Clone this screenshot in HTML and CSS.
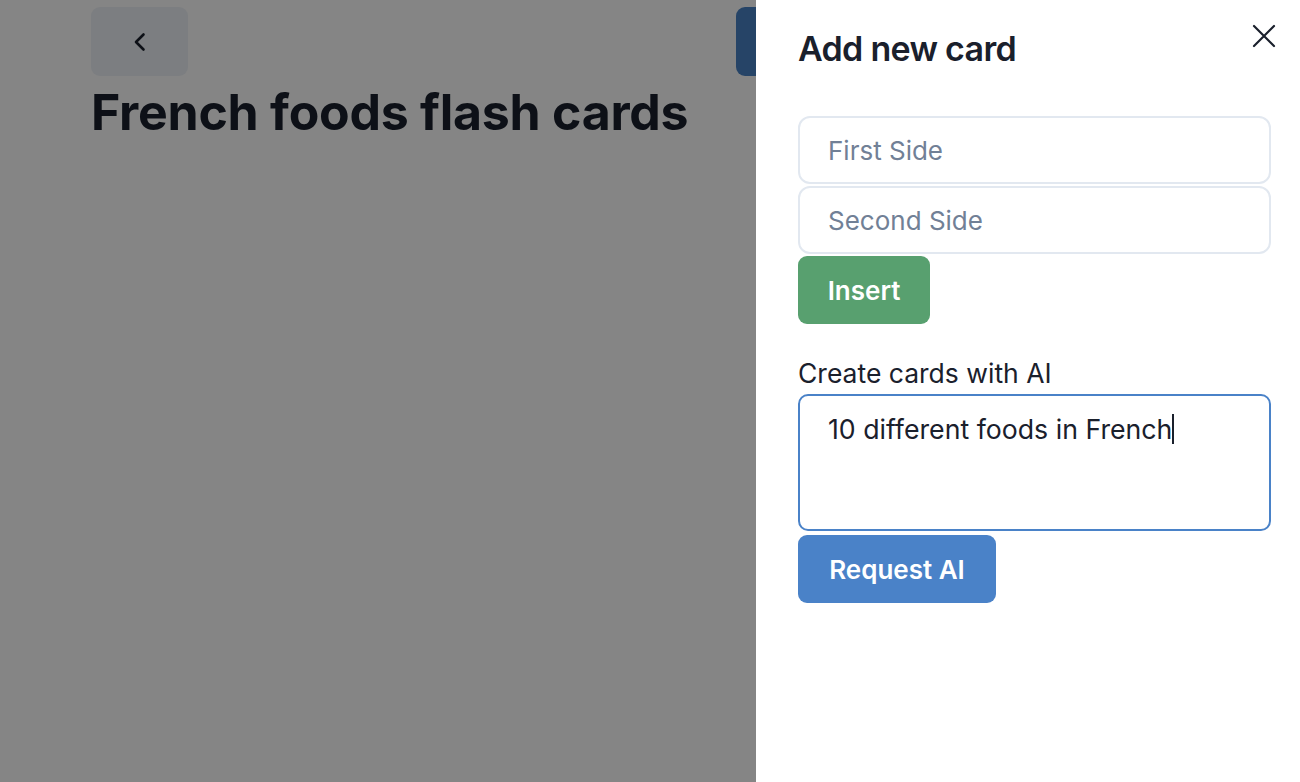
FILE: index.html
```html
<!DOCTYPE html>
<html>
<head>
<meta charset="utf-8">
<link rel="stylesheet" href="styles.css">
</head>
<body>
<div class="page">
  <div class="header">
    <button class="back-btn" aria-label="Back">
      <svg width="22" height="22" viewBox="0 0 22 22"><path d="M14.5 3.5 L7 11 L14.5 18.5" fill="none" stroke="#1a202c" stroke-width="2.6" stroke-linecap="round" stroke-linejoin="round"/></svg>
    </button>
    <button class="add-btn" aria-label="Add new card"></button>
  </div>
  <h1 class="title">French foods flash cards</h1>
</div>
<div class="overlay"></div>
<aside class="drawer">
  <button class="close-btn" aria-label="Close">
    <svg width="24" height="24" viewBox="0 0 24 24"><path d="M2 2 L22 22 M22 2 L2 22" stroke="#1a202c" stroke-width="2.2" stroke-linecap="round"/></svg>
  </button>
  <h2 class="drawer-title">Add new card</h2>
  <div class="drawer-body">
    <div class="form">
      <input class="field" type="text" placeholder="First Side">
      <input class="field" type="text" placeholder="Second Side">
      <div><button class="btn btn-green">Insert</button></div>
    </div>
    <div class="form ai">
      <label class="label">Create cards with AI</label>
      <div class="textarea"><span>10 different foods in French</span><span class="caret"></span></div>
      <div><button class="btn btn-blue">Request AI</button></div>
    </div>
  </div>
</aside>
</body>
</html>
```
FILE: styles.css
```css
* { box-sizing: border-box; }
html, body { margin: 0; padding: 0; }
body {
  width: 1300px;
  height: 782px;
  overflow: hidden;
  background: #fff;
  font-family: Inter, "Noto Sans", sans-serif;
  color: #1a202c;
}
.page {
  padding: 7px 91px 0;
}
.header {
  display: flex;
  justify-content: space-between;
  align-items: center;
}
.back-btn {
  width: 97px;
  height: 69px;
  border: none;
  border-radius: 9px;
  background: #edf2f7;
  display: flex;
  align-items: center;
  justify-content: center;
  padding: 0;
}
.add-btn {
  height: 69px;
  width: 300px;
  margin-left: auto;
  margin-right: 173px;
  border: none;
  border-radius: 9px;
  background: #4a83c6;
}
.title {
  margin: 6px 0 0;
  font-size: 50px;
  font-weight: 700;
  letter-spacing: -0.25px;
  line-height: 60px;
  color: #1a202c;
}
.overlay {
  position: fixed;
  inset: 0;
  background: rgba(0, 0, 0, 0.48);
}
.drawer {
  position: fixed;
  top: 0;
  right: 0;
  bottom: 0;
  width: 544px;
  background: #fff;
  padding: 26px 30px 0 42px;
}
.close-btn {
  position: absolute;
  top: 24px;
  right: 24px;
  width: 24px;
  height: 24px;
  padding: 0;
  border: none;
  background: none;
}
.drawer-title {
  margin: 0;
  font-size: 34px;
  font-weight: 600;
  line-height: 46px;
  letter-spacing: -0.7px;
}
.drawer-body {
  padding-top: 44px;
  display: flex;
  flex-direction: column;
  gap: 32px;
}
.form {
  display: flex;
  flex-direction: column;
  gap: 2px;
}
.field {
  width: 473px;
  height: 68px;
  border: 2px solid #e2e8f0;
  border-radius: 12px;
  padding: 0 28px;
  font: 400 26px Inter, sans-serif;
  color: #1a202c;
  outline: none;
}
.field::placeholder { color: #718096; }
.btn {
  height: 68px;
  border: none;
  border-radius: 9px;
  color: #fff;
  font: 600 26px Inter, sans-serif;
  padding: 0 28px;
}
.btn-green { background: #58a06f; width: 132px; }
.btn-blue { background: #4a82c8; width: 198px; margin-top: 2px; }
.label {
  font-size: 26.5px;
  line-height: 34px;
  margin-bottom: 2px;
}
.textarea {
  width: 473px;
  height: 137px;
  border: 2px solid #4a82c8;
  border-radius: 10px;
  padding: 15px 28px;
  font-size: 26.7px;
  line-height: 36px;
  display: flex;
  align-items: flex-start;
}
.caret {
  display: inline-block;
  width: 2px;
  height: 30px;
  background: #1a202c;
  margin-top: 3px;
}
```
